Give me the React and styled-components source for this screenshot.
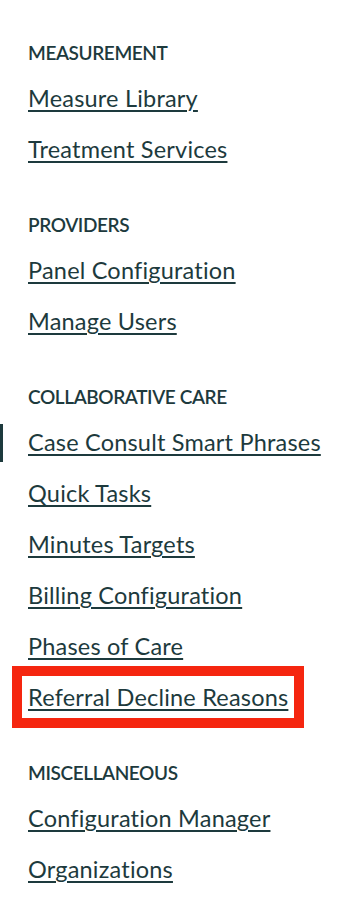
import styled, { createGlobalStyle } from 'styled-components';

const GlobalStyle = createGlobalStyle`
    html, body {
        margin: 0;
        padding: 0;
        background: #ffffff;
    }
    body {
        font-family: Lato, 'Open Sans', sans-serif;
        color: #1d3a3d;
        font-variant-ligatures: none;
    }
`;

const sections = [
    { title: 'Measurement', links: ['Measure Library', 'Treatment Services'] },
    { title: 'Providers', links: ['Panel Configuration', 'Manage Users'] },
    {
        title: 'Collaborative Care',
        links: [
            'Case Consult Smart Phrases',
            'Quick Tasks',
            'Minutes Targets',
            'Billing Configuration',
            'Phases of Care',
            'Referral Decline Reasons',
        ],
    },
    { title: 'Miscellaneous', links: ['Configuration Manager', 'Organizations'] },
];

const ACTIVE = 'Case Consult Smart Phrases';
const HIGHLIGHT = 'Referral Decline Reasons';

const App = () => {
    return (
        <>
            <GlobalStyle />
            <Nav>
                {sections.map((s) => (
                    <Section key={s.title}>
                        <Heading>{s.title}</Heading>
                        <LinkList>
                            {s.links.map((l) => (
                                <Item key={l} $active={l === ACTIVE} $highlight={l === HIGHLIGHT}>
                                    <NavLink href='#'>{l}</NavLink>
                                </Item>
                            ))}
                        </LinkList>
                    </Section>
                ))}
            </Nav>
        </>
    );
};

const Nav = styled.nav`
    display: flex;
    flex-direction: column;
    gap: 44px;
    padding: 41px 0 0 0;
    width: 354px;
`;

const Section = styled.section`
    display: flex;
    flex-direction: column;
`;

const Heading = styled.h3`
    margin: 0 0 0 28px;
    font-size: 19px;
    line-height: 24px;
    font-weight: 600;
    text-transform: uppercase;
    letter-spacing: -0.4px;
    color: #1d3a3d;
`;

const LinkList = styled.ul`
    list-style: none;
    margin: 13px 0 0 0;
    padding: 0;
    display: flex;
    flex-direction: column;
    gap: 11px;
`;

const Item = styled.li`
    position: relative;
    height: 40px;
    display: flex;
    align-items: center;
    padding-left: 28px;

    ${({ $active }) =>
        $active &&
        `
        &::before {
            content: '';
            position: absolute;
            left: 0;
            top: 2px;
            width: 3px;
            height: 38px;
            background: #1d3a3d;
        }
    `}

    ${({ $highlight }) =>
        $highlight &&
        `
        &::after {
            content: '';
            position: absolute;
            left: 12px;
            top: -11px;
            width: 292px;
            height: 62px;
            box-sizing: border-box;
            border: 10px solid #f5260f;
            pointer-events: none;
        }
    `}
`;

const NavLink = styled.a`
    font-size: 23.5px;
    line-height: 28px;
    letter-spacing: 0.2px;
    color: #1d3a3d;
    text-decoration: underline;
    text-decoration-thickness: 2px;
    text-underline-offset: 3px;
`;

export default App;
